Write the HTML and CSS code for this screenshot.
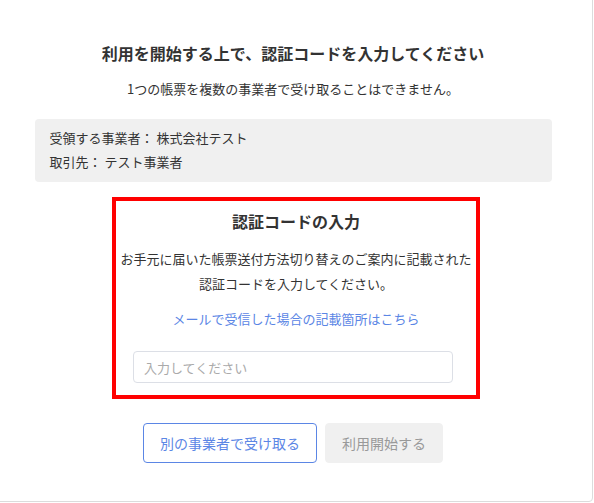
FILE: index.html
```html
<!DOCTYPE html>
<html lang="ja">
<head>
<meta charset="utf-8">
<link rel="stylesheet" href="styles.css">
</head>
<body>
<div class="card">
  <h1 class="title">利用を開始する上で、認証コードを入力してください</h1>
  <p class="lead">1つの帳票を複数の事業者で受け取ることはできません。</p>
  <div class="info">
    <div class="info-row">受領する事業者： 株式会社テスト</div>
    <div class="info-row">取引先： テスト事業者</div>
  </div>
  <div class="auth">
    <h2 class="auth-title">認証コードの入力</h2>
    <p class="auth-desc">お手元に届いた帳票送付方法切り替えのご案内に記載された<br>認証コードを入力してください。</p>
    <a class="auth-link" href="#">メールで受信した場合の記載箇所はこちら</a>
    <input class="auth-input" type="text" placeholder="入力してください">
  </div>
  <div class="actions">
    <button class="btn btn-outline">別の事業者で受け取る</button>
    <button class="btn btn-disabled">利用開始する</button>
  </div>
</div>
</body>
</html>
```
FILE: styles.css
```css
* { box-sizing: border-box; }
html, body { margin: 0; padding: 0; background: #fff; overflow: hidden; }
body {
  font-family: "Noto Sans CJK JP", "Noto Sans", sans-serif;
  color: #333;
}
.card {
  margin: -10px 0 0 -7px;
  width: 600px;
  height: 512px;
  border: 1px solid #dcdcdc;
  border-radius: 4px;
  padding: 50px 0 0;
  display: flex;
  flex-direction: column;
  align-items: center;
}
.title {
  margin: 0;
  font-size: 16px;
  line-height: 24px;
  font-weight: 700;
}
.lead {
  margin: 14px 0 0;
  font-size: 13px;
  line-height: 20px;
}
.info {
  margin-top: 20px;
  width: 517px;
  background: #f0f0f0;
  border-radius: 4px;
  padding: 7px 15px 8px;
}
.info-row {
  font-size: 13px;
  line-height: 24px;
}
.auth {
  margin: 15px 0 0 6px;
  width: 368px;
  border: 4px solid #ff0000;
  padding: 8px 0 12px;
  display: flex;
  flex-direction: column;
  align-items: center;
  text-align: center;
}
.auth-title {
  margin: 0;
  font-size: 16px;
  line-height: 24px;
  font-weight: 700;
}
.auth-desc {
  margin: 13px 0 0;
  font-size: 13px;
  line-height: 25px;
  white-space: nowrap;
}
.auth-link {
  margin-top: 13px;
  font-size: 13px;
  line-height: 20px;
  color: #5b86e5;
  text-decoration: none;
}
.auth-input {
  margin: 22px 6px 0 0;
  width: 320px;
  height: 32px;
  border: 1px solid #dcdfe6;
  border-radius: 4px;
  padding: 0 10px;
  font-family: inherit;
  font-size: 13px;
  color: #333;
  outline: none;
}
.auth-input::placeholder { color: #aaa; }
.actions {
  margin-top: 24px;
  display: flex;
  gap: 8px;
}
.btn {
  height: 40px;
  border-radius: 4px;
  font-family: inherit;
  font-size: 14px;
  padding: 0 16px;
  cursor: pointer;
}
.btn-outline {
  width: 174px;
  background: #fff;
  border: 1px solid #5b86e5;
  color: #5b86e5;
}
.btn-disabled {
  width: 118px;
  background: #f0f0f0;
  border: 1px solid #f0f0f0;
  color: #999;
}
```
